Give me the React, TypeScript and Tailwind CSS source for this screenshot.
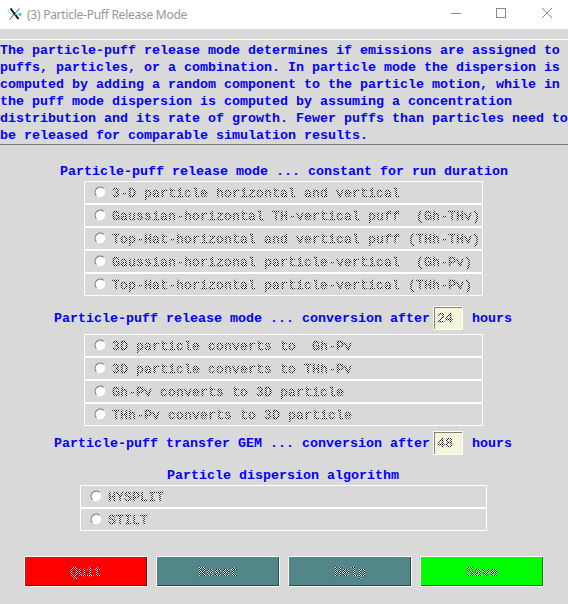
import React from "react";

const MONO = "font-['Liberation_Mono','Courier_New',monospace]";

// Stippled lettering of inactive text: alternating dark and light pixels.
const STIPPLE =
  "bg-[repeating-conic-gradient(#000_0_25%,#fff_0_50%)] bg-[length:2px_2px] bg-clip-text text-transparent [-webkit-text-stroke:0.4px_transparent]";

function Option({ label }: { label: string }) {
  return (
    <label className="flex h-[23px] items-center border border-white pl-[9px]">
      <svg width="12" height="12" viewBox="0 0 12 12" className="mb-px shrink-0">
        <circle cx="6" cy="6" r="5.2" fill="#fff" />
        <path d="M2.4 9.6A5.1 5.1 0 0 1 9.6 2.4" fill="none" stroke="#777" strokeWidth="1.1" />
      </svg>
      <span className={`mt-[2px] ml-[6px] whitespace-pre ${STIPPLE}`}>{label}</span>
    </label>
  );
}

function Options({ items, className }: { items: string[]; className: string }) {
  return (
    <div className={className}>
      {items.map((item) => (
        <Option key={item} label={item} />
      ))}
    </div>
  );
}

function HoursRow({ label, value, className }: { label: string; value: string; className: string }) {
  return (
    <div className={`flex h-6 items-center pl-[54px] font-bold text-[#0000ff] ${className}`}>
      <span className="w-[379px] whitespace-pre">{label}</span>
      <span className="h-6 w-[30px] border border-white">
        <span className="block h-[22px] border-t border-l border-[#888070] bg-[#f5f5dc] pl-[2px] leading-[22px] font-normal">
          <span className={STIPPLE}>{value}</span>
        </span>
      </span>
      <span className="ml-[9px]">hours</span>
    </div>
  );
}

function Button({ label, color }: { label: string; color: string }) {
  return (
    <button className={`flex h-[31px] w-[124px] items-center justify-center border border-white pt-px ${color}`}>
      <span className={STIPPLE}>{label}</span>
    </button>
  );
}

export default function App() {
  return (
    <div className={`flex h-[604px] w-[568px] flex-col overflow-hidden bg-[#d9d9d9] text-[13.333px] leading-[17px] ${MONO}`}>
      <header className="flex h-[29px] shrink-0 items-center bg-white">
        <svg width="16" height="14" viewBox="0 0 16 14" className="mr-1 mb-[2px] ml-[7px] shrink-0">
          <path d="M12.5 1.5 2.5 12.5" stroke="#555" strokeWidth="1" />
          <path d="M3.5 1.5 11.5 12" stroke="#111" strokeWidth="2" />
          <path d="M1 2.5C1 5 3 7 6 7.5M8 7.5h5" stroke="#73d5e5" strokeWidth="1" fill="none" />
          <circle cx="13" cy="7.5" r="1.4" fill="#22c4df" />
        </svg>
        <span className="mb-px flex-1 font-['Noto_Sans','Open_Sans',sans-serif] text-[12px] tracking-[-0.26px] text-[#969696]">
          (3) Particle-Puff Release Mode
        </span>
        <svg width="120" height="29" viewBox="0 0 120 29" fill="none" stroke="#8c8c8c" strokeWidth="1" className="shrink-0">
          <path d="M3 13.5h10" />
          <rect x="48.5" y="8.5" width="9" height="9" />
          <path d="m94 8 10 10m0-10L94 18" />
        </svg>
      </header>

      <p className="mt-[10px] h-[106px] shrink-0 border-t border-b border-t-white border-b-[#777] pt-[2px] font-bold whitespace-pre text-[#0000ff]">
        {[
          "The particle-puff release mode determines if emissions are assigned to",
          "puffs, particles, or a combination. In particle mode the dispersion is",
          "computed by adding a random component to the particle motion, while in",
          "the puff mode dispersion is computed by assuming a concentration",
          "distribution and its rate of growth. Fewer puffs than particles need to",
          "be released for comparable simulation results.",
        ].join("\n")}
      </p>

      <h2 className="mt-[18px] pl-[60px] font-bold whitespace-pre text-[#0000ff]">
        Particle-puff release mode ... constant for run duration
      </h2>
      <Options
        className="mt-px ml-[84px] w-[399px]"
        items={[
          "3-D particle horizontal and vertical",
          "Gaussian-horizontal TH-vertical puff  (Gh-THv)",
          "Top-Hat-horizontal and vertical puff (THh-THv)",
          "Gaussian-horizonal particle-vertical  (Gh-Pv)",
          "Top-Hat-horizontal particle-vertical (THh-Pv)",
        ]}
      />

      <HoursRow className="mt-[10px]" label="Particle-puff release mode ... conversion after" value="24" />
      <Options
        className="mt-[4px] ml-[84px] w-[399px]"
        items={[
          "3D particle converts to  Gh-Pv",
          "3D particle converts to THh-Pv",
          "Gh-Pv converts to 3D particle",
          "THh-Pv converts to 3D particle",
        ]}
      />
      <HoursRow className="mt-[5px]" label="Particle-puff transfer GEM ... conversion after" value="48" />

      <h2 className="mt-[12px] pl-[167px] font-bold text-[#0000ff]">Particle dispersion algorithm</h2>
      <Options className="mt-px ml-[80px] w-[407px]" items={["HYSPLIT", "STILT"]} />

      <div className="mt-[25px] flex gap-2 pl-6">
        <Button label="Quit" color="bg-[#ff0000] shadow-[inset_-1px_-1px_0_#800000]" />
        <Button label="Reset" color="bg-[#528688] shadow-[inset_-1px_-1px_0_#274a4b]" />
        <Button label="Help" color="bg-[#528688] shadow-[inset_-1px_-1px_0_#274a4b]" />
        <Button label="Save" color="bg-[#00ff00] shadow-[inset_-1px_-1px_0_#008000]" />
      </div>
    </div>
  );
}
